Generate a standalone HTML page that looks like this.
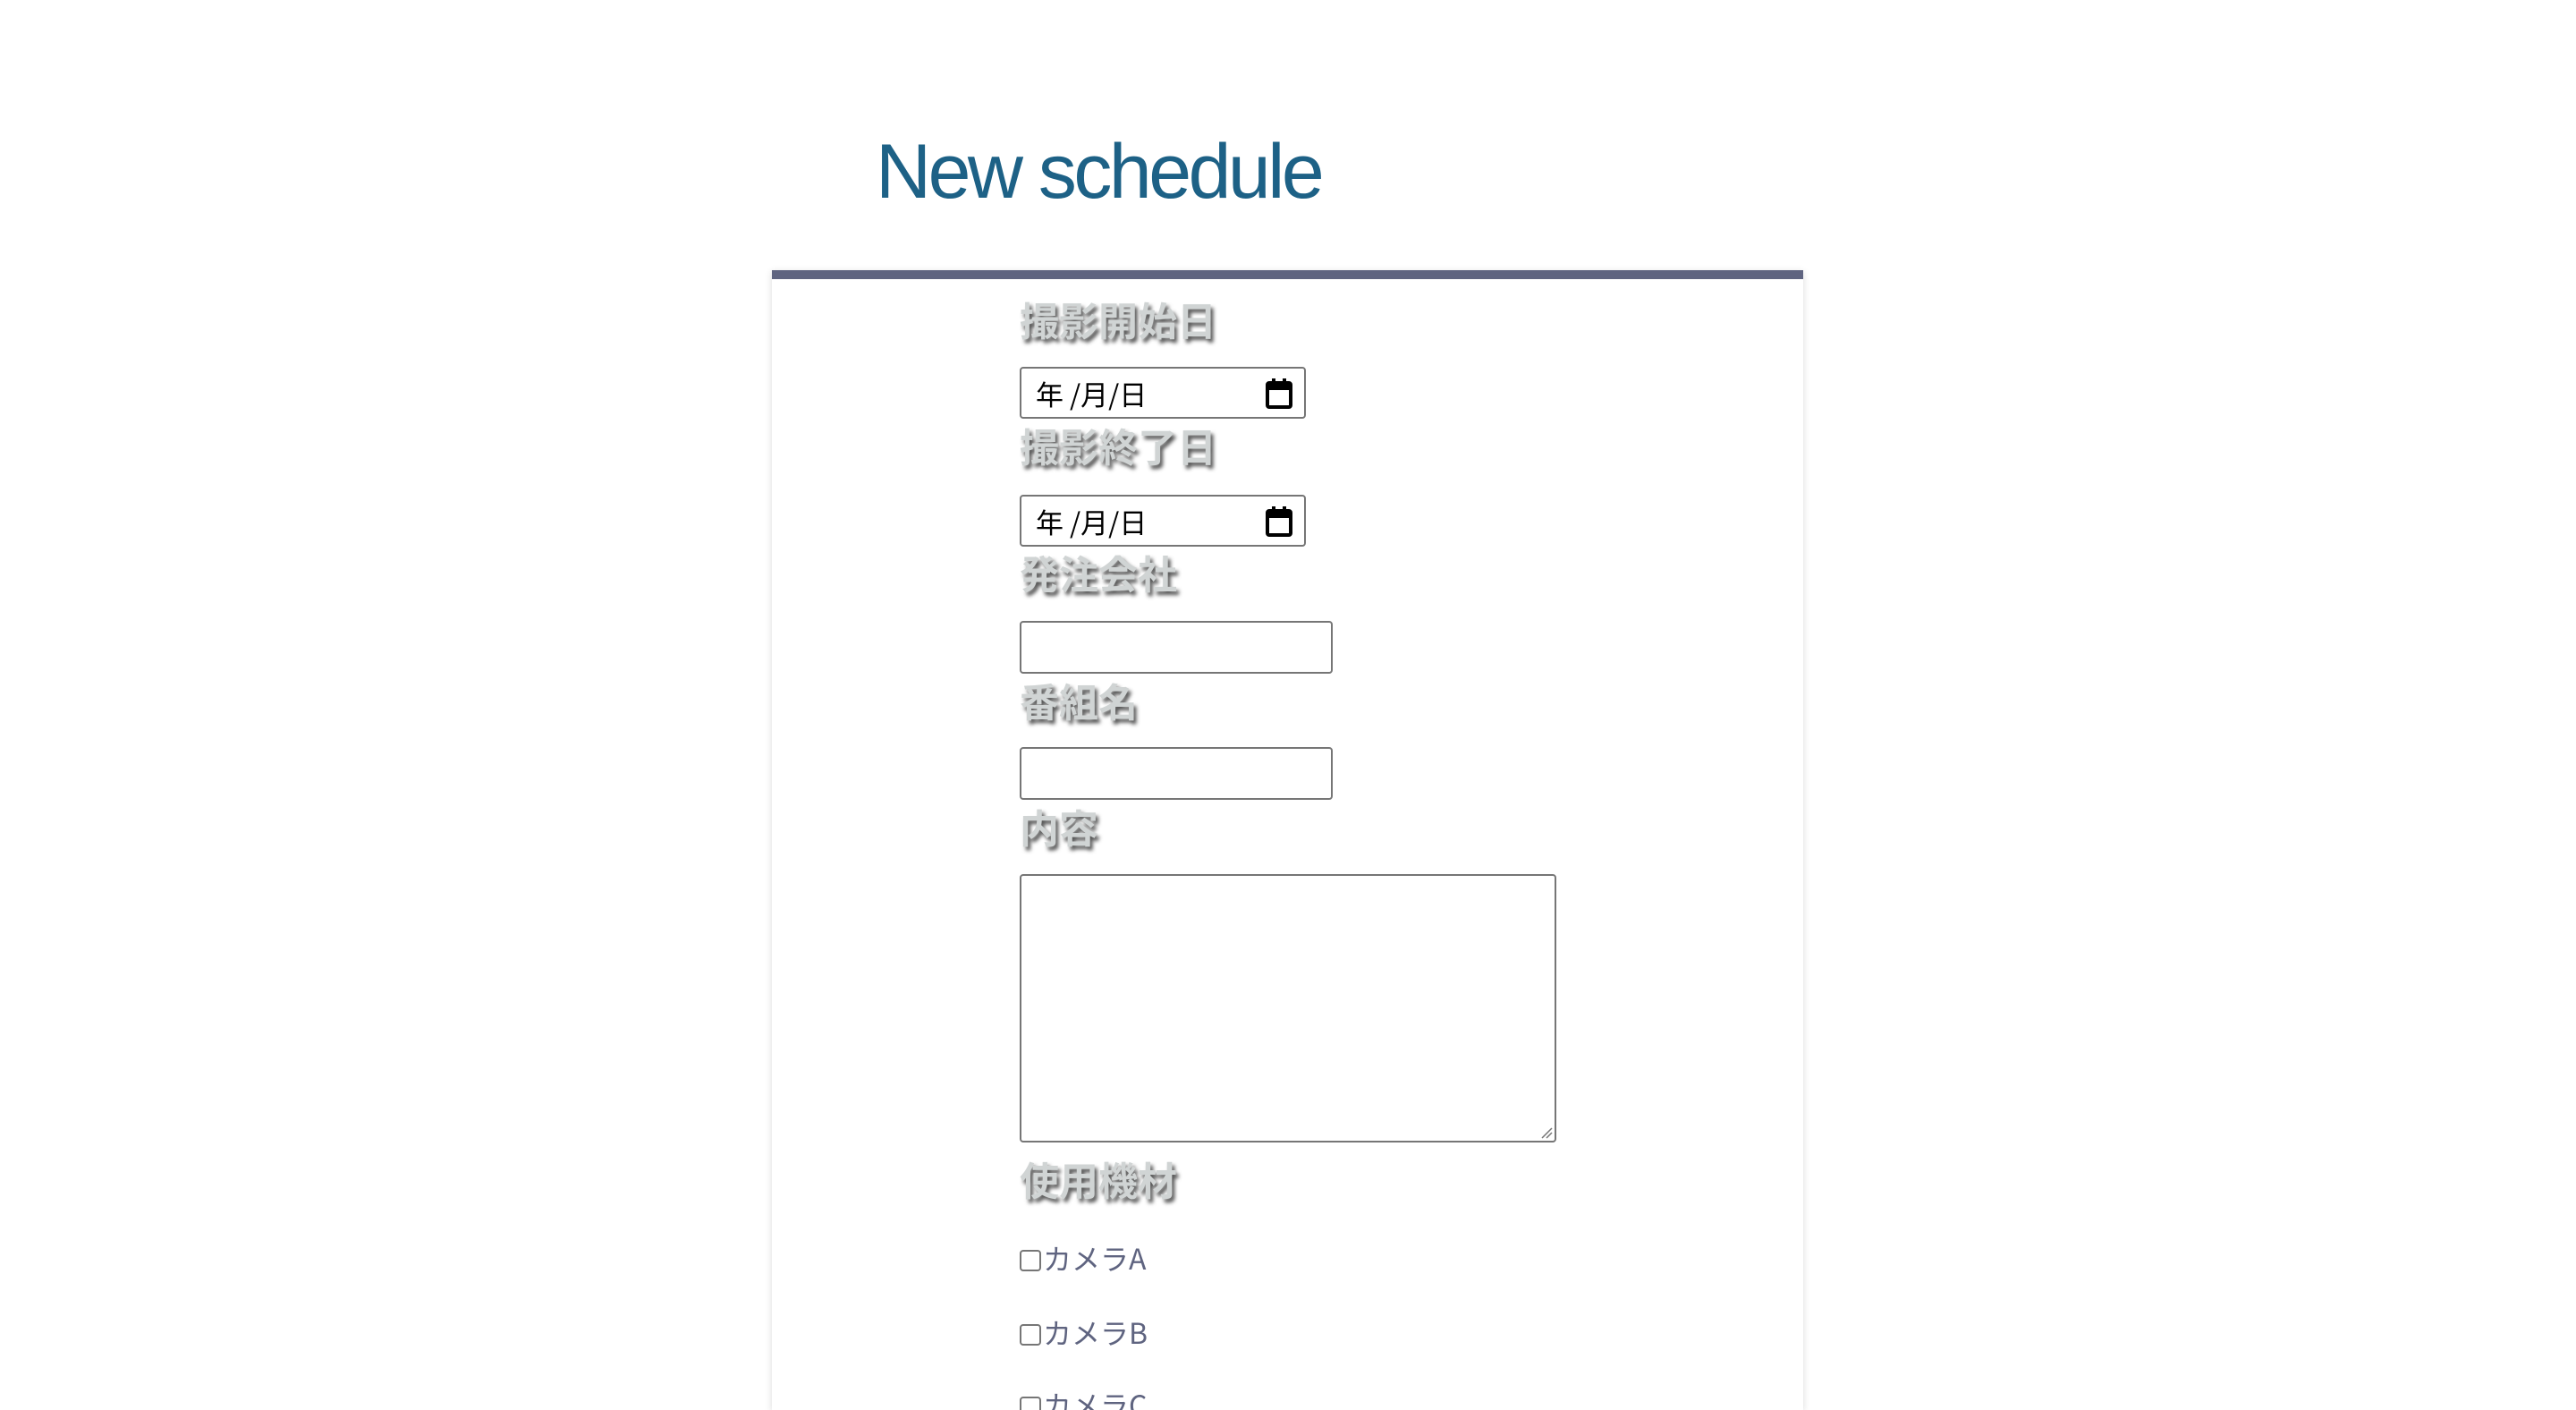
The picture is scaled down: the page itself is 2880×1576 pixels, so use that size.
<!DOCTYPE html>
<html><head><meta charset="utf-8">
<style>
html,body{margin:0;padding:0;background:#fff;width:2880px;height:1576px;overflow:hidden;position:relative;font-family:"Liberation Sans","Noto Sans CJK JP",sans-serif}
h1{position:absolute;left:979px;top:142px;margin:0;font-size:86px;font-weight:normal;color:#1d6186;letter-spacing:-3.5px;line-height:100px}
.card{position:absolute;left:863px;top:302px;width:1153px;height:1264px;background:#fff;border-top:10px solid #5f6480;box-shadow:0 2px 8px rgba(0,0,0,.15)}
.lab{position:absolute;left:1140px;font-size:44px;font-weight:bold;color:#d0d4d4;text-shadow:3px 4px 4px #555;line-height:50px;font-family:"Noto Sans CJK JP",sans-serif}
.box{position:absolute;left:1140px;border:2px solid #767676;border-radius:4px;background:#fff;box-sizing:border-box}
.dt{font-size:31px;color:#000;line-height:55px;padding-left:16px;font-family:"Noto Sans CJK JP",sans-serif}
.cal{position:absolute;right:12px;top:10px}
.cb{position:absolute;left:1140px;font-size:32px;color:#5f6480;font-family:"Noto Sans CJK JP",sans-serif;line-height:40px}
.cb i{display:inline-block;width:20px;height:20px;border:2px solid #767676;border-radius:4px;vertical-align:-2px;margin-right:2px}
</style></head><body>
<h1>New schedule</h1>
<div class="card"></div>

<div class="lab" style="top:331px">撮影開始日</div>
<div class="box dt" style="top:410px;width:320px;height:58px">年 /月/日
<svg class="cal" width="32" height="36" viewBox="0 0 32 36"><rect x="3" y="6" width="26" height="27" rx="2" fill="none" stroke="#000" stroke-width="4"/><rect x="3" y="6" width="26" height="8" fill="#000"/><rect x="8" y="1" width="4" height="7" fill="#000"/><rect x="20" y="1" width="4" height="7" fill="#000"/></svg></div>

<div class="lab" style="top:472px">撮影終了日</div>
<div class="box dt" style="top:553px;width:320px;height:58px">年 /月/日
<svg class="cal" width="32" height="36" viewBox="0 0 32 36"><rect x="3" y="6" width="26" height="27" rx="2" fill="none" stroke="#000" stroke-width="4"/><rect x="3" y="6" width="26" height="8" fill="#000"/><rect x="8" y="1" width="4" height="7" fill="#000"/><rect x="20" y="1" width="4" height="7" fill="#000"/></svg></div>

<div class="lab" style="top:614px">発注会社</div>
<div class="box" style="top:694px;width:350px;height:59px"></div>

<div class="lab" style="top:757px">番組名</div>
<div class="box" style="top:835px;width:350px;height:59px"></div>

<div class="lab" style="top:898px">内容</div>
<div class="box" style="top:977px;width:600px;height:300px">
<svg style="position:absolute;right:2px;bottom:2px" width="14" height="14"><path d="M2 13L13 2M7 13L13 7" stroke="#777" stroke-width="1.5"/></svg></div>

<div class="lab" style="top:1292px">使用機材</div>
<div class="cb" style="top:1386px"><i></i>カメラA</div>
<div class="cb" style="top:1469px"><i></i>カメラB</div>
<div class="cb" style="top:1550px"><i></i>カメラC</div>
</body></html>
